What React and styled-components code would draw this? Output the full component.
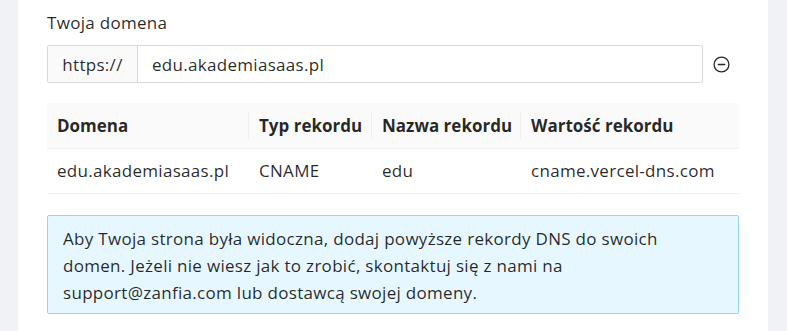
import React from "react";
import styled, { createGlobalStyle } from "styled-components";

const Global = createGlobalStyle`
  html, body { margin: 0; padding: 0; }
  *, *::before, *::after { box-sizing: border-box; }
  body {
    font-family: "Open Sans", "Noto Sans", sans-serif;
    color: rgba(0,0,0,0.85);
    letter-spacing: 0.3px;
  }
`;

const Page = styled.div`
  display: flex;
  width: 787px;
  height: 331px;
  background: #f0f2f5;
  padding: 0 19px 0 18px;
`;

const Panel = styled.div`
  flex: 1;
  min-width: 0;
  background: #fff;
  padding: 12px 29px 0 29px;
  display: flex;
  flex-direction: column;
`;

const Label = styled.div`
  font-size: 17px;
  line-height: 22px;
  margin-bottom: 11px;
`;

const Row = styled.div`
  display: flex;
  align-items: center;
`;

const InputGroup = styled.div`
  flex: 1;
  display: flex;
  height: 38px;
  border: 1px solid #d9d9d9;
  border-radius: 2px;
  font-size: 17px;
`;

const Addon = styled.div`
  width: 90px;
  display: flex;
  align-items: center;
  justify-content: center;
  background: #fafafa;
  border-right: 1px solid #d9d9d9;
`;

const Value = styled.div`
  flex: 1;
  display: flex;
  align-items: center;
  padding-left: 14px;
`;

const IconBtn = styled.button`
  all: unset;
  display: flex;
  margin: 0 9px 0 10px;
  color: rgba(0,0,0,0.85);
  cursor: pointer;
`;

const Table = styled.table`
  margin-top: 20px;
  width: 100%;
  border-collapse: collapse;
  table-layout: fixed;
  font-size: 17px;
`;

const Col = styled.col`
  width: ${(p) => p.$w}px;
`;

const Th = styled.th`
  position: relative;
  height: 45px;
  padding: 0 0 0 ${(p) => p.$pl}px;
  text-align: left;
  font-weight: 700;
  letter-spacing: 0;
  background: #fafafa;
  border-bottom: 1px solid #f0f0f0;
  white-space: nowrap;
  &:not(:first-child)::before {
    content: "";
    position: absolute;
    left: 0;
    top: 50%;
    transform: translateY(-50%);
    width: 1px;
    height: 27px;
    background: #eeeeee;
  }
`;

const Td = styled.td`
  height: 45px;
  padding: 0 0 0 ${(p) => p.$pl}px;
  border-bottom: 1px solid #f0f0f0;
  white-space: nowrap;
`;

const Alert = styled.div`
  margin-top: 21px;
  background: #e6f7ff;
  border: 1px solid #91d5ff;
  border-radius: 2px;
  padding: 9px 15px 7px 15px;
  font-size: 17px;
  line-height: 27px;
  width: 100%;
`;

const MinusCircle = () => (
  <svg width="17" height="17" viewBox="0 0 24 24" fill="none" stroke="currentColor" strokeWidth="1.8" strokeLinecap="round">
    <circle cx="12" cy="12" r="10.5" />
    <line x1="7.5" y1="12" x2="16.5" y2="12" />
  </svg>
);

const cols = [
  { w: 201, pl: 10 },
  { w: 123, pl: 11 },
  { w: 149, pl: 11 },
  { w: 219, pl: 11 },
];

export default function App() {
  const headers = ["Domena", "Typ rekordu", "Nazwa rekordu", "Wartość rekordu"];
  const row = ["edu.akademiasaas.pl", "CNAME", "edu", "cname.vercel-dns.com"];
  return (
    <>
      <Global />
      <Page>
        <Panel>
          <Label>Twoja domena</Label>
          <Row>
            <InputGroup>
              <Addon>https://</Addon>
              <Value>edu.akademiasaas.pl</Value>
            </InputGroup>
            <IconBtn aria-label="Usuń">
              <MinusCircle />
            </IconBtn>
          </Row>
          <Table>
            <colgroup>
              {cols.map((c, i) => (
                <Col key={i} $w={c.w} />
              ))}
            </colgroup>
            <thead>
              <tr>
                {headers.map((h, i) => (
                  <Th key={h} $pl={cols[i].pl}>{h}</Th>
                ))}
              </tr>
            </thead>
            <tbody>
              <tr>
                {row.map((c, i) => (
                  <Td key={c} $pl={cols[i].pl}>{c}</Td>
                ))}
              </tr>
            </tbody>
          </Table>
          <Alert>
            Aby Twoja strona była widoczna, dodaj powyższe rekordy DNS do swoich
            <br />
            domen. Jeżeli nie wiesz jak to zrobić, skontaktuj się z nami na
            <br />
            support@zanfia.com lub dostawcą swojej domeny.
          </Alert>
        </Panel>
      </Page>
    </>
  );
}
